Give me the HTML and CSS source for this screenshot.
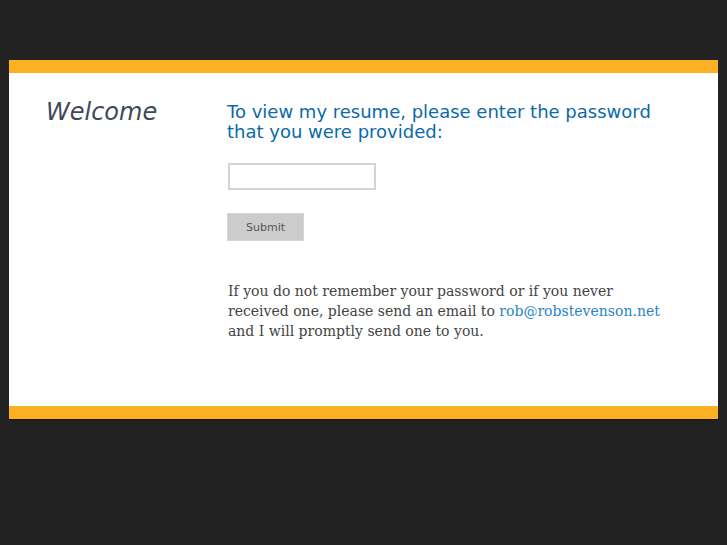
FILE: index.html
```html
<!DOCTYPE html>
<html lang="en">
<head>
    <meta charset="UTF-8">
    <title>Rob Stevenson - Resume</title>
    <link rel="stylesheet" href="styles.css">
</head>
<body>
    <div class="page">
        <div class="stripe"></div>
        <div class="content">
            <h1 class="welcome">Welcome</h1>
            <div class="main">
                <h2>To view my resume, please enter the password that you were provided:</h2>
                <form class="login" onsubmit="return false;">
                    <input type="password" class="password">
                    <button type="submit">Submit</button>
                </form>
                <p class="note">If you do not remember your password or if you never received one, please send an email to <a href="#">rob@robstevenson.net</a> and I will promptly send one to you.</p>
            </div>
        </div>
        <div class="stripe"></div>
    </div>
</body>
</html>
```

FILE: styles.css
```css
/* General */
body {
    margin: 0;
    padding: 60px 9px 0;
    background-color: #222222;
    font-family: "DejaVu Sans", Verdana, sans-serif;
    height: 545px;
    box-sizing: border-box;
}

.page {
    background: #fff;
    box-shadow: 0 1px 0 rgba(0, 0, 0, 0.4);
}

.stripe {
    height: 13px;
    background-color: #fdb022;
}

.content {
    display: flex;
    height: 333px;
}

.welcome {
    margin: 24px 0 0 37px;
    width: 181px;
    font-size: 24px;
    font-weight: normal;
    font-style: italic;
    color: #3f4957;
    line-height: 30px;
}

.main {
    padding-top: 29px;
}

h2 {
    margin: 0;
    width: 440px;
    font-size: 18px;
    font-weight: normal;
    line-height: 20px;
    color: #0a6aab;
}

/* Form */
.login {
    display: flex;
    flex-direction: column;
    align-items: flex-start;
    margin-top: 21px;
}

.password {
    width: 148px;
    height: 27px;
    box-sizing: border-box;
    border: 2px solid #d3d3d3;
    margin: 0 0 23px 1px;
    padding: 2px 4px;
}

.login button {
    width: 77px;
    height: 28px;
    border: 1px solid #d6d6d6;
    background-color: #cccccc;
    color: #555;
    font-family: "DejaVu Sans", Verdana, sans-serif;
    font-size: 11px;
    cursor: pointer;
}

.note {
    margin: 40px 0 0 1px;
    width: 445px;
    font-family: "DejaVu Serif", Georgia, serif;
    font-size: 14px;
    line-height: 20px;
    color: #444;
}

.note a {
    color: #2a84c6;
    text-decoration: none;
}
```
